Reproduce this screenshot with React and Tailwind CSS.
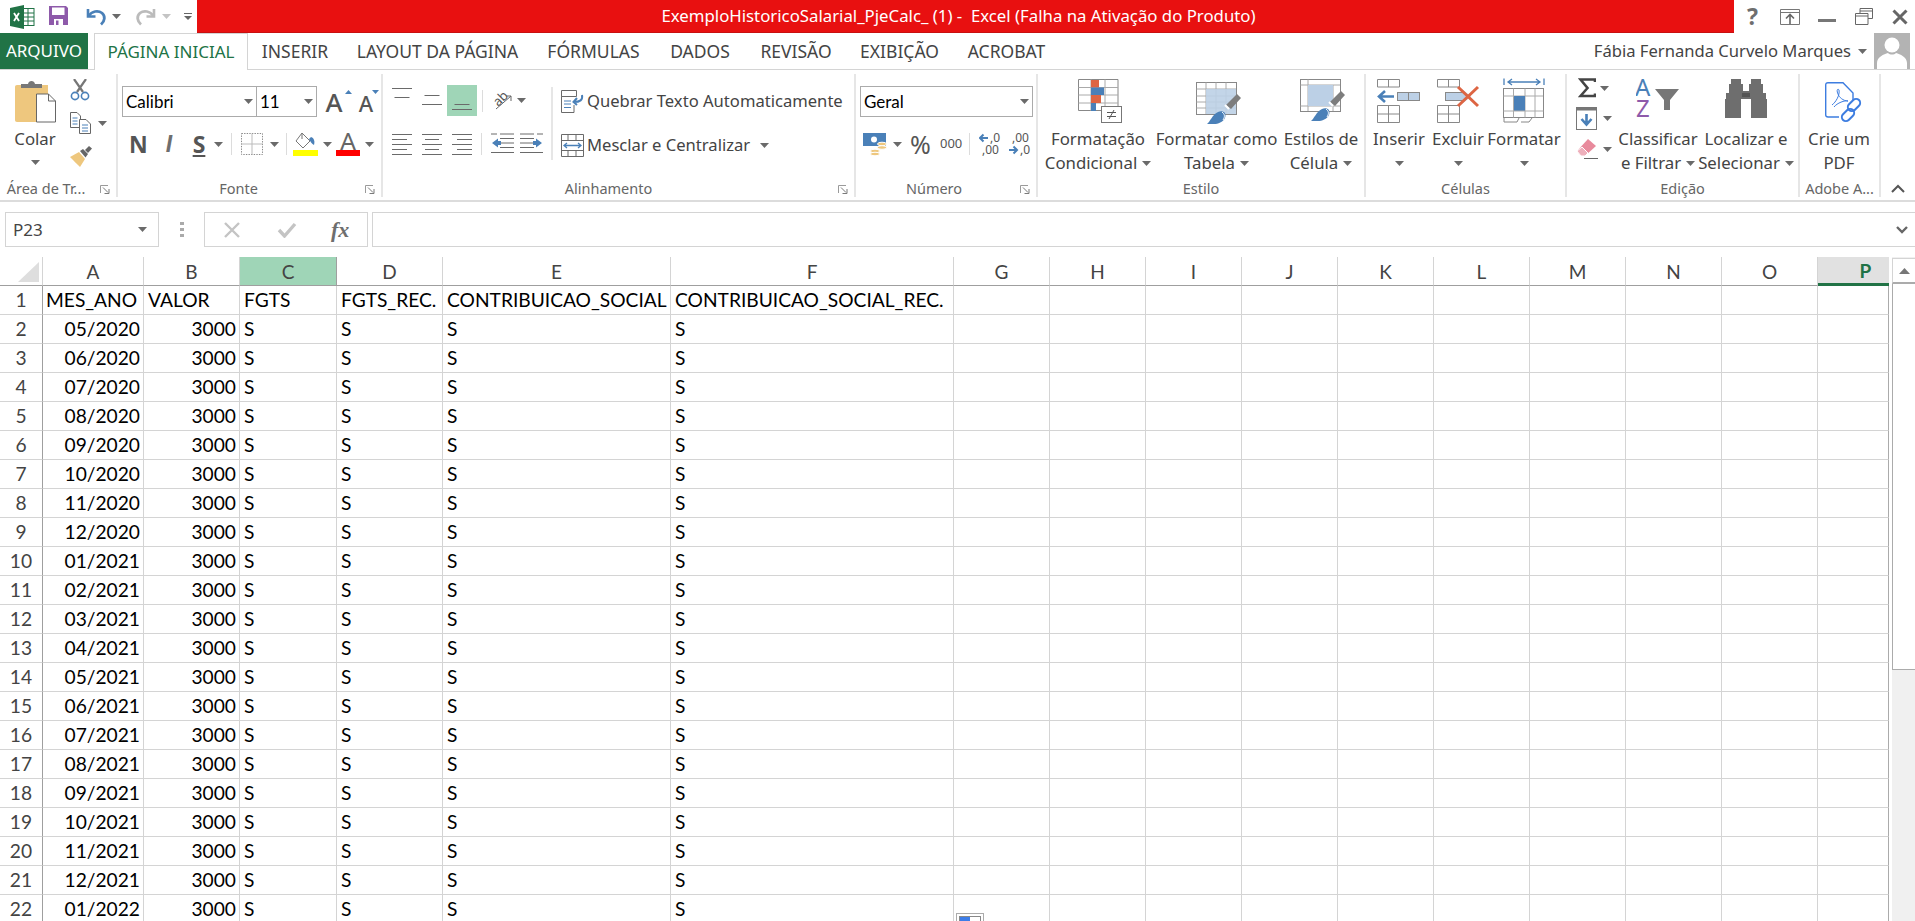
const Caret = ({ c = "#6a6a6a", className = "" }) => (
  <svg width="9" height="5" viewBox="0 0 9 5" className={"shrink-0 " + className}><polygon points="0,0 9,0 4.5,5" fill={c} /></svg>
);
const Launcher = ({ className = "" }) => (
  <svg width="10" height="9" viewBox="0 0 10 9" className={"shrink-0 " + className}>
    <path d="M0.5 8 V0.5 H8" fill="none" stroke="#9a9a9a" />
    <path d="M3 2.5 L8 7.5 M9 4 V8.5 H4.5" fill="none" stroke="#7a7a7a" />
  </svg>
);
const B = "#4a80b8", O = "#dd6543", P = "#eec77e";

const ExcelI = () => (
  <svg width="25" height="24" viewBox="0 0 25 24">
    <rect x="12" y="3.5" width="12" height="17" fill="#fff" stroke="#217346" />
    <path d="M12 8h12M12 12h12M12 16h12M18 4v16" stroke="#217346" />
    <polygon points="0,3 14,0 14,24 0,21" fill="#217346" />
    <path d="M4 8l5 8M9 8l-5 8" stroke="#fff" strokeWidth="1.8" />
  </svg>
);
const SaveI = () => (
  <svg width="19" height="19" viewBox="0 0 19 19">
    <path d="M0 0H17L19 2V19H0Z" fill="#8e5aaa" />
    <rect x="3" y="1.5" width="12.5" height="7.5" fill="#fff" />
    <rect x="5" y="13" width="9" height="6" fill="#fff" />
    <rect x="7" y="14.5" width="2.5" height="4.5" fill="#8e5aaa" />
  </svg>
);
const UndoI = ({ c, flip }) => (
  <svg width="22" height="19" viewBox="0 0 22 19" className={flip ? "-scale-x-100" : ""}>
    <path d="M3 2V9.5H10.5" fill="none" stroke={c} strokeWidth="2.6" />
    <path d="M3.5 9C7 4 13 3 17 6C20.5 9 20 14 16 17.5" fill="none" stroke={c} strokeWidth="2.8" />
  </svg>
);
const PasteI = () => (
  <svg width="41" height="44" viewBox="0 0 41 44">
    <path d="M2 6H33V19H29V43H2C0.8 43 0 42.2 0 41V8C0 6.8 0.8 6 2 6Z" fill={P} />
    <path d="M6 9V5H13C13.5 1 19.5 1 20 5H27V9Z" fill="#777" />
    <path d="M21.5 16.5H33.5L40.5 23.5V44.5H21.5Z" transform="translate(0 -1.5)" fill="#fff" stroke="#666" />
    <path d="M33.5 15V22H40.5" fill="none" stroke="#666" />
  </svg>
);
const ScissorsI = () => (
  <svg width="20" height="22" viewBox="0 0 20 22">
    <path d="M4 0L13 13M16 0L7 13" stroke="#777" strokeWidth="2.2" />
    <circle cx="5" cy="17" r="3.6" fill="none" stroke={B} strokeWidth="1.6" />
    <circle cx="15" cy="17" r="3.6" fill="none" stroke={B} strokeWidth="1.6" />
  </svg>
);
const CopyI = () => (
  <svg width="21" height="22" viewBox="0 0 21 22">
    <path d="M0.5 0.5H7L10.5 4V15.5H0.5Z" fill="#fff" stroke="#666" />
    <path d="M9.5 7.5H16L20.5 12V21.5H9.5Z" fill="#fff" stroke="#666" />
    <path d="M2.5 6h5M2.5 9h5M2.5 12h5M12 13h6M12 16h6M12 19h6" stroke={B} />
  </svg>
);
const BrushI = () => (
  <svg width="22" height="21" viewBox="0 0 22 21">
    <path d="M0 11L9 6L15 13L10 21C6 17 3 14 0 11Z" fill={P} />
    <path d="M10 5L13 3L18 8L15.5 11.5Z" fill="#666" />
    <path d="M15 4L19 0L22 2.5L18 7Z" fill="#666" />
  </svg>
);
const BorderI = () => (
  <svg width="22" height="22" viewBox="0 0 22 22">
    <path d="M0.5 0.5H21.5V21.5H0.5Z" fill="none" stroke="#8a8a8a" strokeDasharray="1.4 1.2" />
    <path d="M11 0.5V21.5M0.5 11H21.5" stroke="#bbb" />
  </svg>
);
const FillI = () => (
  <svg width="25" height="24" viewBox="0 0 25 24" className="shrink-0">
    <path d="M9 1L17 9L10 16L3 9Z" fill="#fff" stroke="#777" />
    <path d="M9 1V7" stroke="#777" />
    <path d="M18 5C21 6 22 9 21 13C19 12 17 9 16 7Z" fill={B} />
    <rect x="0" y="18" width="25" height="6" fill="#ffff00" />
  </svg>
);
const FontColorI = () => (
  <div className="flex flex-col items-center w-[24px] h-[24px] shrink-0">
    <span className="text-[26px] leading-[18px] text-[#666]">A</span>
    <div className="w-[24px] h-[6px] bg-[#ff0000] mt-auto" />
  </div>
);
const Lines = ({ w = 20, gap = 4, n = 2, ws, align = "center" }) => (
  <svg width={w} height={(n - 1) * gap + 1} viewBox={`0 0 ${w} ${(n - 1) * gap + 1}`} className="shrink-0">
    {Array.from({ length: n }).map((_, i) => {
      const lw = ws ? ws[i] : w;
      const x = align === "left" ? 0 : align === "right" ? w - lw : (w - lw) / 2;
      return <rect key={i} x={x} y={i * gap} width={lw} height="1" fill="#6a6a6a" />;
    })}
  </svg>
);
const OrientI = () => (
  <svg width="20" height="18" viewBox="0 0 20 18">
    <g transform="rotate(-45 8 8)"><text x="1" y="11" fontSize="13" fontFamily="Noto Sans" fill="#555">ab</text></g>
    <path d="M3 17L18 4M13 4H18V9" fill="none" stroke="#666" />
  </svg>
);
const IndentI = ({ flip }) => (
  <svg width="23" height="22" viewBox="0 0 23 22" className={flip ? "-scale-x-100" : ""}>
    <path d="M9 1h14M9 5.5h14M9 10h14M9 14.5h14M0 19.5h23M0 1h6" stroke="#6a6a6a" strokeWidth="1" />
    <path d="M1 10L7 5.5V8H10V12H7V14.5Z" fill={B} />
  </svg>
);
const WrapI = () => (
  <svg width="23" height="23" viewBox="0 0 23 23">
    <path d="M0.5 0.5H15.5V6.5H0.5ZM0.5 6.5H13M0.5 6.5V22.5H13V15" fill="none" stroke="#6a6a6a" />
    <path d="M3 11h7M3 14h7M3 17.5h7" stroke={B} />
    <path d="M21 5C22 10 19 12 13 12M16 8L12.5 12L16 15" fill="none" stroke={B} strokeWidth="2" />
  </svg>
);
const MergeI = () => (
  <svg width="23" height="23" viewBox="0 0 23 23">
    <path d="M0.5 0.5H22.5V22.5H0.5ZM0.5 6.5H22.5M0.5 16.5H22.5M7 0.5V6.5M15 0.5V6.5M7 16.5V22.5M15 16.5V22.5" fill="none" stroke="#6a6a6a" />
    <path d="M3 11.5H20M6 9L3 11.5L6 14M17 9L20 11.5L17 14" fill="none" stroke={B} strokeWidth="1.3" />
  </svg>
);
const CurrencyI = () => (
  <svg width="24" height="23" viewBox="0 0 24 23" className="shrink-0">
    <rect x="0" y="0" width="23" height="13" fill={B} />
    <circle cx="11" cy="6.5" r="3" fill="#fff" />
    <ellipse cx="19" cy="11" rx="4.5" ry="1.8" fill={P} stroke="#fff" />
    <ellipse cx="19" cy="14.5" rx="4.5" ry="1.8" fill={P} stroke="#fff" />
    <ellipse cx="12" cy="18" rx="4.5" ry="1.8" fill={P} stroke="#fff" />
    <ellipse cx="12" cy="21" rx="4.5" ry="1.8" fill={P} stroke="#fff" />
  </svg>
);
const DecI = ({ t1, t2, left, arrowTop }) => (
  <svg width="23" height="24" viewBox="0 0 23 24" className="shrink-0">
    <text x={arrowTop ? 11 : 3} y="10" fontSize="12" fontFamily="Noto Sans" fill="#555">{t1}</text>
    <text x={arrowTop ? 3 : 11} y="22" fontSize="12" fontFamily="Noto Sans" fill="#555">{t2}</text>
    <g transform={arrowTop ? "translate(0 0)" : "translate(0 12)"}>
      {left
        ? <path d="M9 6H1M4.5 2.5L1 6L4.5 9.5" fill="none" stroke={B} strokeWidth="2" />
        : <path d="M0 6H8M4.5 2.5L8 6L4.5 9.5" fill="none" stroke={B} strokeWidth="2" />}
    </g>
  </svg>
);
const CFI = () => (
  <svg width="45" height="44" viewBox="0 0 45 44" className="ml-[4px]">
    <path d="M0.5 0.5H40V33H24V31.5H0.5Z" fill="#fff" stroke="#888" />
    <path d="M0.5 8.5H40M0.5 16H40M0.5 24H40M13 0.5V32M27 0.5V32" stroke="#aaa" />
    <rect x="13" y="1" width="8" height="7.5" fill={O} />
    <rect x="13" y="8.5" width="13" height="7.5" fill={B} />
    <rect x="13" y="16" width="10" height="8" fill={O} />
    <rect x="13" y="24" width="5" height="8" fill={B} />
    <rect x="23.5" y="27.5" width="20" height="16" fill="#fff" stroke="#777" />
    <path d="M29 33.5h9M29 37.5h9M36 31L31 40" stroke="#555" />
  </svg>
);
const TableBrushI = ({ full }) => (
  <svg width="46" height="42" viewBox="0 0 46 42" className="ml-[4px]">
    <rect x="0.5" y="0.5" width="40" height="32" fill="#fff" stroke="#888" />
    {full
      ? <path d="M8 0.5V32M0.5 6H40M33 6V32M0.5 27H40" stroke="#aaa" />
      : <path d="M0.5 7H40M0.5 14H40M0.5 20H40M0.5 26H40M10 0.5V32M20 0.5V32M30 0.5V32" stroke="#aaa" />}
    <rect x={full ? 8 : 10} y={full ? 6 : 7} width={full ? 25 : 30} height={full ? 21 : 25} fill="#bcd0e6" opacity={full ? 1 : 0.9} />
    <path d="M30 23L41 12L45 16L35 27Z" fill="#7d7d7d" />
    <path d="M29 23L33 27" stroke="#fff" strokeWidth="2" />
    <path d="M11 42C14 40 16 33 22 30C27 28 31 31 29 36C27 40 22 42 18 42Z" fill={B} />
    <path d="M26 30C29 32 29 35 27 38" fill="none" stroke="#fff" />
  </svg>
);
const InsertI = () => (
  <svg width="44" height="44" viewBox="0 0 44 44">
    <path d="M0.5 0.5H22.5V8H0.5ZM11.5 0.5V8M0.5 26.5H22.5V43.5H0.5ZM11.5 26.5V43.5M0.5 35H22.5" fill="#fff" stroke="#888" />
    <rect x="20.5" y="13.5" width="22" height="8" fill="#bcd0e6" stroke="#888" />
    <path d="M31.5 13.5V21.5" stroke="#888" />
    <path d="M17 17.5H3M8 12L2 17.5L8 23" fill="none" stroke={B} strokeWidth="2.6" />
  </svg>
);
const DeleteI = () => (
  <svg width="44" height="44" viewBox="0 0 44 44" className="ml-[2px]">
    <path d="M0.5 0.5H22.5V8H0.5ZM11.5 0.5V8M0.5 26.5H22.5V43.5H0.5ZM11.5 26.5V43.5M0.5 35H22.5" fill="#fff" stroke="#888" />
    <rect x="8.5" y="13.5" width="18" height="8" fill="#bcd0e6" stroke="#888" />
    <polygon points="26,11 34,17.5 26,24" fill="#bcd0e6" />
    <path d="M21 8L41 27M41 8L21 27" stroke={O} strokeWidth="3" />
  </svg>
);
const FormatI = () => (
  <svg width="42" height="46" viewBox="0 0 42 46">
    <path d="M1 0.5V7M41 0.5V7M5 4H37M9 1L5 4L9 7M33 1L37 4L33 7" fill="none" stroke={B} strokeWidth="1.3" />
    <rect x="0.5" y="10.5" width="40" height="29" fill="#fff" stroke="#888" />
    <path d="M10.5 10.5V39.5M32 10.5V39.5M22 10.5V39.5M0.5 18H40" stroke="#aaa" />
    <rect x="11" y="18" width="11" height="15" fill={B} />
    <path d="M0.5 33H40.5" stroke="#aaa" />
    <path d="M1 39.5V44H14L16 40M18 44H26L29 40" fill="none" stroke="#888" />
  </svg>
);
const SigmaI = () => (
  <svg width="18" height="20" viewBox="0 0 18 20" className="shrink-0">
    <path d="M17 4V1.5H2.5L9.5 10L2.5 18H17V15.5" fill="none" stroke="#444" strokeWidth="2.6" />
  </svg>
);
const FillDownI = () => (
  <svg width="22" height="23" viewBox="0 0 22 23" className="shrink-0">
    <rect x="0.5" y="0.5" width="20" height="22" fill="#fff" stroke="#777" />
    <rect x="0.5" y="0.5" width="20" height="3" fill="#777" />
    <path d="M10.5 7V17M5.5 12L10.5 17.5L15.5 12" fill="none" stroke={B} strokeWidth="2.6" />
  </svg>
);
const EraserI = () => (
  <svg width="22" height="20" viewBox="0 0 22 20" className="shrink-0">
    <path d="M0 12L11 0L19 7L8 17H4Z" fill="#e88a9c" />
    <path d="M0 12L5 8L11 14L8 17H4Z" fill="#eeb0bc" stroke="#fff" />
    <path d="M7 19.5H21" stroke="#666" />
  </svg>
);
const SortI = () => (
  <svg width="44" height="40" viewBox="0 0 44 40">
    <text x="-1" y="18" fontSize="24" fontFamily="Noto Sans" fill={B}>A</text>
    <text x="0" y="39" fontSize="24" fontFamily="Noto Sans" fill="#8e5aaa">Z</text>
    <path d="M19 11H43L34 22V32L28 32V22Z" fill="#777" />
  </svg>
);
const BinocI = () => (
  <svg width="42" height="39" viewBox="0 0 42 39">
    <path d="M6 0H16V5H18V12H24V5H26V0H36V5H38V14H41V20H42V39H26V20H16V39H0V20H1V14H4V5H6Z" fill="#6e6e6e" />
    <path d="M17 14H25V18H17Z" fill="#555" />
  </svg>
);
const PdfI = () => (
  <svg width="38" height="42" viewBox="0 0 38 42" fill="none" stroke="#3d7de0" strokeWidth="1.4" className="ml-[10px]">
    <path d="M14 35H3C1.5 35 0.7 34 0.7 33V3C0.7 1.5 1.5 0.7 3 0.7H18L28 11V18" />
    <path d="M7 23C11 20 15 13 14 8C13 6 11 8 13 12C14 15 18 19 23 19C20 18 12 21 9 25" strokeWidth="1" />
    <rect x="22" y="19" width="14" height="8" rx="4" transform="rotate(-45 29 23)" strokeWidth="2" />
    <rect x="16" y="29" width="14" height="8" rx="4" transform="rotate(-45 23 33)" strokeWidth="2" />
  </svg>
);
const Avatar = () => (
  <svg width="36" height="36" viewBox="0 0 36 36" className="shrink-0">
    <rect width="36" height="36" fill="#b3b3b3" />
    <circle cx="18" cy="12" r="7.5" fill="#fff" />
    <path d="M3 36V30C3 24 10 21 14 20C16 22 20 22 22 20C26 21 33 24 33 30V36Z" fill="#fff" />
  </svg>
);

const ui = "font-['Noto_Sans',sans-serif]";
const Big = ({ icon, l1, l2, w, caret = true, top = "pt-[5px]" }) => (
  <div className={"flex flex-col items-center shrink-0 " + w}>
    <div className={"h-[53px] flex items-start justify-center " + top}>{icon}</div>
    <div className="h-[24px] leading-[24px] whitespace-nowrap">{l1}</div>
    <div className="h-[24px] leading-[24px] whitespace-nowrap flex items-center gap-[5px]">
      {l2 && <span>{l2}</span>}
      {caret && <Caret />}
    </div>
  </div>
);
const Group = ({ w, label, launcher, children }) => (
  <div className={"shrink-0 h-[123px] flex flex-col relative border-r-2 border-[#e6e6e6] " + w}>
    <div className="flex-1 min-h-0 flex">{children}</div>
    <div className="h-[17px] flex items-center justify-center text-[#666] text-[14.5px] whitespace-nowrap leading-none">{label}</div>
    {launcher && <Launcher className="absolute right-[6px] bottom-[3px]" />}
  </div>
);
const Combo = ({ w, text }) => (
  <div className={"h-[31px] flex items-center justify-between pl-[3px] pr-[3px] border border-[#ababab] bg-white shrink-0 " + w}>
    <span className="font-['Lato',sans-serif] text-[17px] text-black">{text}</span>
    <Caret />
  </div>
);

const Sep = ({ h = "h-[22px]" }) => <div className={"w-[1px] bg-[#dcdcdc] shrink-0 " + h} />;

const tabs = [
  ["INSERIR", "w-[94px]"],
  ["LAYOUT DA PÁGINA", "w-[191px]"],
  ["FÓRMULAS", "w-[121px]"],
  ["DADOS", "w-[92px]"],
  ["REVISÃO", "w-[100px]"],
  ["EXIBIÇÃO", "w-[107px]"],
  ["ACROBAT", "w-[107px]"],
];

const rows = ["05/2020","06/2020","07/2020","08/2020","09/2020","10/2020","11/2020","12/2020","01/2021","02/2021","03/2021","04/2021","05/2021","06/2021","07/2021","08/2021","09/2021","10/2021","11/2021","12/2021","01/2022"];
const cols = "grid grid-cols-[43px_101px_96px_97px_106px_228px_283px_repeat(9,96px)_71px] grid-rows-[29px]";
const emptyCols = Array.from({ length: 10 });
const headers = ["A","B","C","D","E","F","G","H","I","J","K","L","M","N","O","P"];
const cell = "h-[29px] border-r border-b border-[#d4d4d4] overflow-visible whitespace-nowrap leading-[28px]";

function Row({ n, vals }) {
  return (
    <div className={cols}>
      <div className={cell + " text-center text-[#444] border-r-[#9f9f9f]"}>{n}</div>
      {vals.map((v, i) => (
        <div key={i} className={cell + " text-black " + (i < 2 && n > 1 ? "text-right pr-[3px]" : i === 0 ? "pl-[3px]" : "pl-[4px]")}>{v}</div>
      ))}
      {emptyCols.map((_, i) => (
        <div key={i} className={cell + (i === 9 ? " border-r-[#ababab]" : "")} />
      ))}
    </div>
  );
}

export default function App() {
  return (
    <div className={"w-[1915px] h-[921px] overflow-hidden flex flex-col bg-white text-[#444] text-[16.8px] " + ui}>
      {/* Title bar */}
      <div className="h-[33px] flex items-center shrink-0">
        <div className="ml-[10px] w-[39px]"><ExcelI /></div>
        <div className="w-[36px] mt-[-3px]"><SaveI /></div>
        <UndoI c={B} />
        <Caret className="ml-[5px] mr-[14px]" />
        <UndoI c="#bbbbbb" flip />
        <Caret c="#c4c4c4" className="ml-[5px] mr-[13px]" />
        <svg width="8" height="7" viewBox="0 0 8 7" className="shrink-0"><path d="M0 0.5H8" stroke="#666" /><polygon points="0,3 8,3 4,7" fill="#666" /></svg>
        <div className="ml-[5px] w-[1537px] h-[33px] pr-[14px] bg-[#e81010] border-b border-[#c81010] text-white flex items-center justify-center text-[16.8px] whitespace-pre shrink-0">
          ExemploHistoricoSalarial_PjeCalc_ (1) -  Excel (Falha na Ativação do Produto)
        </div>
        <span className="ml-[13px] text-[23px] font-bold text-[#6e6e6e] leading-none w-[31px]">?</span>
        <svg width="20" height="16" viewBox="0 0 20 16" className="ml-[2px] shrink-0"><path d="M0.5 0.5H19.5V15.5H0.5Z M0.5 3.5H19.5" fill="none" stroke="#777" /><path d="M10 15V6M6 9.5L10 5.5L14 9.5" fill="none" stroke="#666" strokeWidth="1.6" /></svg>
        <div className="ml-[18px] w-[18px] h-[3px] bg-[#777] mt-[7px] shrink-0" />
        <svg width="18" height="17" viewBox="0 0 18 17" className="ml-[19px] shrink-0"><path d="M5 5V0.5H17.5V10.5H13M5 3H17.5M0.5 5.5H13V16.5H0.5ZM0.5 8H13" fill="none" stroke="#666" /></svg>
        <svg width="16" height="16" viewBox="0 0 16 16" className="ml-[19px] shrink-0"><path d="M1.5 1.5L14.5 14.5M14.5 1.5L1.5 14.5" stroke="#666" strokeWidth="3" /></svg>
      </div>
      {/* Tabs */}
      <div className="h-[37px] flex items-stretch shrink-0 border-b border-[#d4d4d4] text-[17.5px]">
        <div className="w-[88px] bg-[#217346] text-white flex items-center justify-center text-[17px]">ARQUIVO</div>
        <div className="ml-[6px] w-[154px] h-[37px] border border-b-0 border-[#d4d4d4] bg-white text-[#217346] flex items-center justify-center text-[17px]">PÁGINA INICIAL</div>
        {tabs.map(([t, w]) => (
          <div key={t} className={"flex items-center justify-center whitespace-nowrap " + w}>{t}</div>
        ))}
        <div className="ml-auto flex items-center">
          <span className="text-[16.6px] whitespace-nowrap">Fábia Fernanda Curvelo Marques</span>
          <Caret className="ml-[7px] mr-[7px]" />
          <Avatar />
          <div className="w-[5px]" />
        </div>
      </div>
      {/* Ribbon */}
      <div className="h-[132px] pt-[4px] flex items-start shrink-0 border-b-2 border-[#dcdcdc]">
        <Group w="w-[118px]" label={<span className="pr-[24px]">Área de Tr...</span>} launcher>
          <div className="w-[70px] shrink-0 flex flex-col items-center">
            <div className="h-[48px] mt-[5px]"><PasteI /></div>
            <div className="h-[24px] leading-[24px]">Colar</div>
            <Caret className="mt-[9px]" />
          </div>
          <div className="flex flex-col mt-[5px] items-start">
            <ScissorsI />
            <div className="flex items-center mt-[11px]"><CopyI /><Caret className="ml-[7px]" /></div>
            <div className="mt-[12px]"><BrushI /></div>
          </div>
        </Group>
        <Group w="w-[265px]" label={<span className="pr-[22px]">Fonte</span>} launcher>
          <div className="pl-[4px] pt-[12px] flex flex-col">
            <div className="flex items-center">
              <Combo w="w-[135px]" text="Calibri" />
              <Combo w="w-[61px] ml-[-1px]" text="11" />
              <div className="relative w-[26px] ml-[4px] text-center text-[26px] font-medium leading-none text-[#555]">A
                <svg width="7" height="4" viewBox="0 0 7 4" className="absolute right-[-5px] top-[1px]"><polygon points="0,4 7,4 3.5,0" fill={B} /></svg>
              </div>
              <div className="relative w-[22px] ml-[8px] text-center text-[22px] font-medium leading-none text-[#555] pt-[3px]">A
                <svg width="7" height="4" viewBox="0 0 7 4" className="absolute right-[-2px] top-[1px]"><polygon points="0,0 7,0 3.5,4" fill={B} /></svg>
              </div>
            </div>
            <div className="flex items-center mt-[14px] h-[26px]">
              <span className="w-[16px] ml-[7px] text-center text-[23px] font-bold text-[#555]">N</span>
              <span className="w-[16px] ml-[16px] text-center text-[23px] italic font-bold text-[#6e6e6e] font-['Liberation_Sans']">I</span>
              <span className="w-[14px] ml-[15px] text-center text-[23px] font-bold underline text-[#555]">S</span>
              <Caret className="ml-[8px] mr-[8px]" />
              <Sep />
              <div className="ml-[9px]"><BorderI /></div>
              <Caret className="ml-[7px] mr-[7px]" />
              <Sep />
              <div className="ml-[6px]"><FillI /></div>
              <Caret className="ml-[5px] mr-[4px]" />
              <FontColorI />
              <Caret className="ml-[5px]" />
            </div>
          </div>
        </Group>
        <Group w="w-[473px]" label={<span className="pr-[20px]">Alinhamento</span>} launcher>
          <div className="flex flex-col pl-[9px]">
            <div className="flex items-center h-[31px] mt-[11px]">
              <div className="self-start mt-[3px]"><Lines w={20} gap={9} n={2} ws={[20, 15]} /></div>
              <div className="ml-[10px] mt-[-2px]"><Lines w={20} gap={9} n={2} ws={[15, 20]} /></div>
              <div className="ml-[5px] w-[30px] h-[31px] bg-[#9fd5b7] flex items-end justify-center pb-[6px]"><Lines w={20} gap={5} n={2} ws={[15, 20]} /></div>
              <div className="ml-[5px]"><Sep /></div>
              <div className="ml-[10px]"><OrientI /></div>
              <Caret className="ml-[4px]" />
            </div>
            <div className="flex items-center h-[24px] mt-[16px]">
              <Lines w={20} gap={5} n={5} ws={[20, 15, 20, 15, 20]} align="left" />
              <div className="ml-[10px]"><Lines w={20} gap={5} n={5} ws={[20, 14, 20, 14, 20]} /></div>
              <div className="ml-[10px]"><Lines w={20} gap={5} n={5} ws={[20, 15, 20, 15, 20]} align="right" /></div>
              <div className="ml-[9px]"><Sep /></div>
              <div className="ml-[9px]"><IndentI /></div>
              <div className="ml-[6px]"><IndentI flip /></div>
            </div>
          </div>
          <div className="ml-[8px] mt-[13px] w-[2px] h-[73px] bg-[#e6e6e6] shrink-0" />
          <div className="pl-[8px] flex flex-col text-[16.6px]">
            <div className="flex items-center mt-[16px] h-[23px] gap-[3px] whitespace-nowrap"><WrapI /><span>Quebrar Texto Automaticamente</span></div>
            <div className="flex items-center mt-[21px] h-[23px] gap-[3px] whitespace-nowrap"><MergeI /><span>Mesclar e Centralizar</span><Caret className="ml-[7px]" /></div>
          </div>
        </Group>
        <Group w="w-[182px]" label={<span className="pr-[24px]">Número</span>} launcher>
          <div className="pl-[4px] pt-[12px] flex flex-col">
            <Combo w="w-[173px]" text="Geral" />
            <div className="flex items-center mt-[15px] h-[24px]">
              <div className="ml-[3px]"><CurrencyI /></div>
              <Caret className="ml-[6px]" />
              <span className="ml-[8px] text-[25px] leading-none text-[#555] w-[22px]">%</span>
              <span className="ml-[8px] text-[13px] text-[#555] w-[21px]">000</span>
              <div className="ml-[8px]"><Sep /></div>
              <div className="ml-[9px]"><DecI t1=",0" t2=",00" left arrowTop /></div>
              <div className="ml-[7px]"><DecI t1=",00" t2=",0" /></div>
            </div>
          </div>
        </Group>
        <Group w="w-[328px]" label="Estilo">
          <div className="w-[3px]" />
          <Big w="w-[114px]" icon={<CFI />} l1="Formatação" l2="Condicional" />
          <Big w="w-[123px]" icon={<TableBrushI />} l1="Formatar como" l2="Tabela" top="pt-[8px]" />
          <Big w="w-[86px]" icon={<TableBrushI full />} l1="Estilos de" l2="Célula" />
        </Group>
        <Group w="w-[201px]" label="Células">
          <div className="w-[3px]" />
          <Big w="w-[60px]" icon={<InsertI />} l1="Inserir" />
          <Big w="w-[58px]" icon={<DeleteI />} l1="Excluir" />
          <Big w="w-[74px]" icon={<FormatI />} l1="Formatar" top="pt-[4px]" />
        </Group>
        <Group w="w-[233px]" label="Edição">
          <div className="flex flex-col pl-[9px] w-[49px] shrink-0 mt-[4px]">
            <div className="flex items-center gap-[4px] pl-[2px]"><SigmaI /><Caret /></div>
            <div className="flex items-center gap-[5px] mt-[9px]"><FillDownI /><Caret /></div>
            <div className="flex items-center gap-[4px] mt-[9px] pl-[1px]"><EraserI /><Caret /></div>
          </div>
          <Big w="w-[84px]" icon={<SortI />} l1="Classificar" l2="e Filtrar" top="pt-[4px]" />
          <Big w="w-[92px]" icon={<BinocI />} l1="Localizar e" l2="Selecionar" />
        </Group>
        <Group w="w-[81px]" label="Adobe A...">
          <div className="w-[3px]" />
          <Big w="w-[72px]" icon={<PdfI />} l1="Crie um" l2="PDF" caret={false} top="pt-[8px]" />
        </Group>
        <div className="flex-1 h-[123px] flex items-end justify-center pb-[4px]">
          <svg width="14" height="9" viewBox="0 0 14 9"><path d="M1 8L7 2L13 8" fill="none" stroke="#555" strokeWidth="2" /></svg>
        </div>
      </div>
      {/* Formula bar */}
      <div className="h-[35px] mt-[10px] flex items-stretch shrink-0">
        <div className="ml-[5px] w-[154px] border border-[#d4d4d4] flex items-center justify-between pl-[7px] pr-[11px] text-[17px]">
          <span>P23</span><Caret />
        </div>
        <div className="w-[45px] flex flex-col items-center justify-center gap-[3px] shrink-0">
          <div className="w-[4px] h-[3px] bg-[#aaa]" /><div className="w-[4px] h-[3px] bg-[#aaa]" /><div className="w-[4px] h-[3px] bg-[#aaa]" />
        </div>
        <div className="w-[164px] border border-[#d4d4d4] flex items-center shrink-0">
          <svg width="18" height="16" viewBox="0 0 18 16" className="ml-[18px]"><path d="M2 1L16 15M16 1L2 15" stroke="#c4c4c4" strokeWidth="2.4" /></svg>
          <svg width="20" height="16" viewBox="0 0 20 16" className="ml-[36px]"><path d="M2 8L7.5 14L18 2" fill="none" stroke="#c4c4c4" strokeWidth="3.4" /></svg>
          <span className="ml-[34px] font-['Liberation_Serif'] italic font-bold text-[22px] text-[#6e6e6e]">fx</span>
        </div>
        <div className="ml-[4px] flex-1 border border-[#d4d4d4] border-r-0 flex items-center justify-end pr-[7px]">
          <svg width="12" height="8" viewBox="0 0 12 8"><path d="M1 1L6 6L11 1" fill="none" stroke="#666" strokeWidth="2.4" /></svg>
        </div>
      </div>
      {/* Sheet */}
      <div className="mt-[10px] flex-1 min-h-0 flex relative font-['Lato',sans-serif] text-[19.2px]">
        <div className="w-[1889px] shrink-0">
          <div className={cols + " leading-none"}>
            <div className="relative border-r border-[#d4d4d4] border-b border-b-[#9f9f9f]">
              <svg width="21" height="20" viewBox="0 0 21 20" className="absolute left-[18px] top-[5px]"><polygon points="21,0 21,20 0,20" fill="#dedede" /></svg>
            </div>
            {headers.map((h) => (
              <div key={h} className={"flex items-center justify-center text-[19px] border-b " + (h === "C" ? "bg-[#9fd5b7] text-[#444] border-r border-r-[#9f9f9f] border-b-[#9f9f9f]" : h === "P" ? "bg-[#e1e1e1] text-[#217346] font-bold pl-[24px] border-b-[3px] border-b-[#217346]" : "text-[#444] border-r border-r-[#d4d4d4] border-b-[#9f9f9f]")}>
                {h}
              </div>
            ))}
          </div>
          <Row n={1} vals={["MES_ANO", "VALOR", "FGTS", "FGTS_REC.", "CONTRIBUICAO_SOCIAL", "CONTRIBUICAO_SOCIAL_REC."]} />
          {rows.map((d, i) => (
            <Row key={d + i} n={i + 2} vals={[d, "3000", "S", "S", "S", "S"]} />
          ))}
        </div>
        <div className="ml-[3px] w-[23px] flex flex-col bg-[#f0f0f0]">
          <div className="h-[26px] mt-[1px] bg-white border border-b-2 border-r-0 border-[#d4d4d4] border-b-[#ababab] flex items-center justify-center shrink-0">
            <svg width="11" height="6" viewBox="0 0 11 6"><polygon points="0,6 11,6 5.5,0" fill="#777" /></svg>
          </div>
          <div className="h-[386px] bg-white border border-t-0 border-r-0 border-[#ababab] shrink-0" />
        </div>
        <div className="absolute left-[956px] top-[656px] w-[28px] h-[12px] bg-white border border-[#ababab] pl-[2px] pt-[2px]">
          <div className="w-[22px] h-[8px] border border-[#888] border-b-0 flex">
            <div className="w-[10px] h-full bg-[#3d7de8]" />
          </div>
        </div>
      </div>
    </div>
  );
}
